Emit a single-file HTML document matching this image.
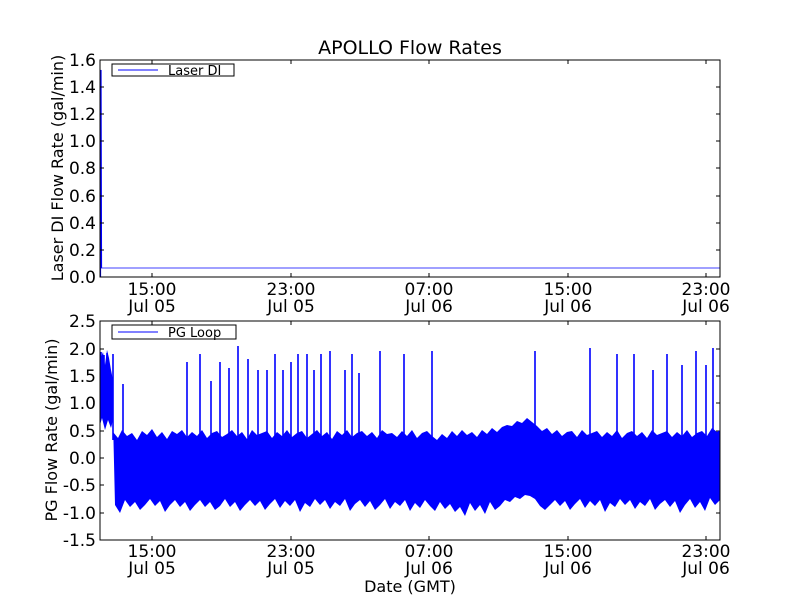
<!DOCTYPE html>
<html><head><meta charset="utf-8"><style>
html,body{margin:0;padding:0;background:#fff;width:800px;height:600px;overflow:hidden}
svg text{font-family:"DejaVu Sans","Liberation Sans",sans-serif;fill:#000}
</style></head><body>
<svg width="800" height="600" viewBox="0 0 800 600" xmlns="http://www.w3.org/2000/svg">
<rect width="800" height="600" fill="#fff"/>
<text x="410" y="54" font-size="19" text-anchor="middle">APOLLO Flow Rates</text>
<line x1="100" y1="268" x2="720" y2="268" stroke="#0000ff" stroke-width="0.8"/>
<path d="M100.5,277 L100.5,72 L101,70 L101.5,268" stroke="#0000ff" stroke-width="1.2" fill="none"/>
<rect x="100" y="60" width="620" height="217" fill="none" stroke="#000" stroke-width="1"/>
<g font-size="17" text-anchor="end">
<text x="96" y="283">0.0</text><text x="96" y="256">0.2</text><text x="96" y="229">0.4</text><text x="96" y="202">0.6</text><text x="96" y="174">0.8</text><text x="96" y="147">1.0</text><text x="96" y="120">1.2</text><text x="96" y="93">1.4</text><text x="96" y="66">1.6</text>
</g>
<g stroke="#000">
<path d="M100,250H104M100,223H104M100,196H104M100,168H104M100,141H104M100,114H104M100,87H104M716,250H720M716,223H720M716,196H720M716,168H720M716,141H720M716,114H720M716,87H720"/>
<path d="M152,60v4M291,60v4M429,60v4M568,60v4M706,60v4M152,277v-4M291,277v-4M429,277v-4M568,277v-4M706,277v-4"/>
<path d="M100,513H104M100,485H104M100,458H104M100,431H104M100,403H104M100,376H104M100,349H104M716,513H720M716,485H720M716,458H720M716,431H720M716,403H720M716,376H720M716,349H720"/>
<path d="M152,321v4M291,321v4M429,321v4M568,321v4M706,321v4M152,540v-4M291,540v-4M429,540v-4M568,540v-4M706,540v-4"/>
</g>
<g font-size="17" text-anchor="middle">
<text x="152" y="295">15:00</text><text x="152" y="312">Jul 05</text>
<text x="291" y="295">23:00</text><text x="291" y="312">Jul 05</text>
<text x="429" y="295">07:00</text><text x="429" y="312">Jul 06</text>
<text x="568" y="295">15:00</text><text x="568" y="312">Jul 06</text>
<text x="706" y="295">23:00</text><text x="706" y="312">Jul 06</text>
<text x="152" y="557">15:00</text><text x="152" y="574">Jul 05</text>
<text x="291" y="557">23:00</text><text x="291" y="574">Jul 05</text>
<text x="429" y="557">07:00</text><text x="429" y="574">Jul 06</text>
<text x="568" y="557">15:00</text><text x="568" y="574">Jul 06</text>
<text x="706" y="557">23:00</text><text x="706" y="574">Jul 06</text>
</g>
<rect x="112" y="64" width="122" height="12" fill="#fff" stroke="#000"/>
<line x1="118" y1="70" x2="158" y2="70" stroke="#0000ff"/>
<text x="168" y="75" font-size="13">Laser DI</text>
<text transform="translate(63,168) rotate(-90)" font-size="16" text-anchor="middle">Laser DI Flow Rate (gal/min)</text>
<polygon fill="#0000ff" points="100,360 103,352 105,365 107,350 109,358 111,370 113,380 113,432 118,438 122,430 127,436 132,433 137,440 142,431 147,435 152,429 157,437 162,432 167,439 172,431 177,434 182,430 187,437 192,432 197,436 202,430 207,438 212,433 217,431 222,437 227,434 232,430 237,436 242,432 247,439 252,430 257,435 262,433 267,431 272,438 277,432 282,436 287,430 292,437 297,433 302,431 307,438 312,434 317,430 322,436 327,432 332,439 337,431 342,435 347,430 352,437 357,433 362,431 367,436 372,432 377,438 382,430 387,434 392,433 397,437 402,431 407,436 412,430 417,438 422,433 427,431 432,436 437,440 442,434 447,438 452,431 457,436 462,430 467,435 472,432 477,437 482,430 487,434 492,428 497,432 502,427 507,425 512,426 517,421 522,423 527,418 532,422 537,426 542,431 547,428 552,434 557,430 562,436 567,432 572,431 577,437 582,430 587,435 592,433 597,431 602,437 607,432 612,436 617,430 622,438 627,433 632,431 637,436 642,432 647,438 652,430 657,435 662,433 667,431 672,437 677,432 682,436 687,430 692,437 697,433 702,431 707,436 712,428 717,432 720,430 720,500 715,505 710,498 705,511 700,502 695,508 690,499 685,505 680,513 675,501 670,507 665,500 660,504 655,510 650,499 645,506 640,502 635,509 630,500 625,505 620,499 615,507 610,503 605,512 600,500 595,506 590,501 585,508 580,499 575,504 570,510 565,501 560,506 555,500 550,505 545,510 540,506 535,499 530,496 525,495 520,499 515,497 510,502 505,500 500,506 495,510 490,502 485,514 480,505 475,511 470,503 465,516 460,507 455,512 450,504 445,509 440,502 435,511 430,506 425,500 420,508 415,503 410,511 405,500 400,506 395,502 390,509 385,499 380,505 375,510 370,501 365,507 360,500 355,504 350,511 345,499 340,506 335,502 330,509 325,500 320,505 315,499 310,507 305,503 300,512 295,500 290,506 285,501 280,508 275,499 270,504 265,510 260,501 255,506 250,500 245,505 240,511 235,502 230,507 225,499 220,506 215,510 210,502 205,507 200,500 195,505 190,511 185,502 180,507 175,500 170,505 165,512 160,501 155,506 150,499 145,505 140,510 135,502 130,507 125,500 120,513 115,505 113,420 111,428 108,420 105,430 102,418 100,425"/>
<path stroke="#0000ff" stroke-width="1.6" fill="none" d="M113,440V354M123,440V384M187,440V362M200,440V354M211,440V381M220,440V362M229,440V368M238,440V346M248,440V359M258,440V370M267,440V370M275,440V354M283,440V370M291,440V362M298,440V354M307,440V354M314,440V370M321,440V354M330,440V351M345,440V370M352,440V354M359,440V373M380,440V351M404,440V354M432,440V351M535,440V351M590,440V348M617,440V354M634,440V354M653,440V370M667,440V354M682,440V365M696,440V351M706,440V365M713,440V348M101,400V352M104,400V355M107,400V353"/>
<rect x="100" y="321" width="620" height="219" fill="none" stroke="#000" stroke-width="1"/>
<g font-size="17" text-anchor="end">
<text x="96" y="546">-1.5</text><text x="96" y="519">-1.0</text><text x="96" y="491">-0.5</text><text x="96" y="464">0.0</text><text x="96" y="437">0.5</text><text x="96" y="409">1.0</text><text x="96" y="382">1.5</text><text x="96" y="355">2.0</text><text x="96" y="327">2.5</text>
</g>
<rect x="112" y="325" width="124" height="14" fill="#fff" stroke="#000"/>
<line x1="118" y1="332" x2="158" y2="332" stroke="#0000ff"/>
<text x="168" y="337" font-size="13">PG Loop</text>
<text transform="translate(57,430) rotate(-90)" font-size="16" text-anchor="middle">PG Flow Rate (gal/min)</text>
<text x="410" y="592" font-size="16" text-anchor="middle">Date (GMT)</text>
</svg>
</body></html>
